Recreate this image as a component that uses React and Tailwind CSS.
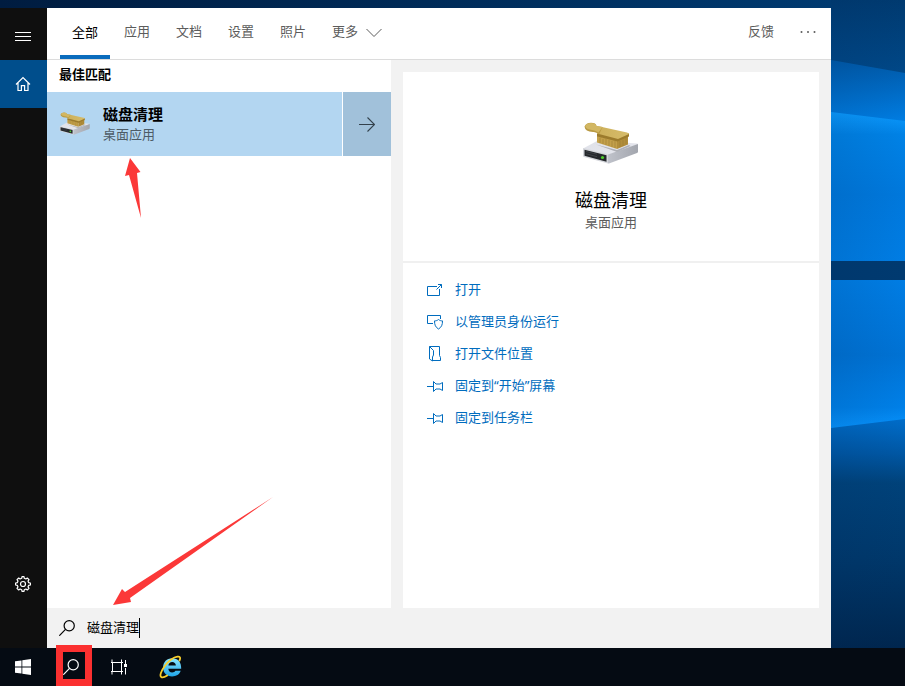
import React, { useId, useState } from 'react';

const TABS = ['全部', '应用', '文档', '设置', '照片'];

const HomeIcon = () => (
    <svg className="w-4 h-4" viewBox="0 0 16 16" fill="none" stroke="currentColor" strokeWidth="1.2">
        <path d="M1 8.5 8 1.5l7 7M3 6.8v7.7h3.4V9.6h3.2v4.9H13V6.8" />
    </svg>
);

const MenuIcon = () => (
    <svg className="w-4 h-4" viewBox="0 0 16 16" stroke="currentColor" strokeWidth="1">
        <path d="M0 4.5h16M0 8.5h16M0 12.5h16" />
    </svg>
);

const GearIcon = () => (
    <svg className="w-4 h-4" viewBox="0 0 16 16" fill="none" stroke="currentColor" strokeWidth="1.2" strokeLinejoin="round">
        <path d="M6.7 2.3 7 .6h2l.3 1.7 1.6.7 1.4-1L14 3.7l-1 1.4.7 1.6 1.7.3v2l-1.7.3-.7 1.6 1 1.4-1.7 1.7-1.4-1-1.6.7L9 15.4H7l-.3-1.7-1.6-.7-1.4 1L2 12.300l1-1.4-.7-1.600L.6 9V7l1.700-.3L3 5.100l-1-1.400L3.700 2l1.400 1z" />
        <circle cx="8" cy="8" r="2.500" />
    </svg>
);

const SearchIcon = () => (
    <svg className="w-4 h-4" viewBox="0 0 16 16" fill="none" stroke="currentColor" strokeWidth="1.2">
        <circle cx="10.2" cy="5.800" r="5.100" />
        <path d="M6.500 9.400.3 15.700" />
    </svg>
);

const ChevronIcon = () => (
    <svg className="w-4 h-4" viewBox="0 0 16 16" fill="none" stroke="currentColor" strokeWidth="1">
        <path d="M.5 5 8 12.500 15.500 5" />
    </svg>
);

const ArrowIcon = () => (
    <svg className="w-4 h-4" viewBox="0 0 16 16" fill="none" stroke="currentColor" strokeWidth="1.1">
        <path d="M0 8.500h15.500M8.500 1.500l7 7-7 7" />
    </svg>
);

const OpenIcon = () => (
    <svg className="w-4 h-4" viewBox="0 0 16 16" fill="none" stroke="currentColor" strokeWidth="1">
        <path d="M10 4.500H.5v9h12V7M9.500 7.500l5-5M11 2.500h3.500V6" />
    </svg>
);

const AdminIcon = () => (
    <svg className="w-4 h-4" viewBox="0 0 16 16" fill="none" stroke="currentColor" strokeWidth="1">
        <path d="M6 9.500H.5v-8h13V5" />
        <path d="M11.500 5.500c-1.200 1-2.500 1.400-4 1.400 0 4 1 6.300 4 8.100 3-1.800 4-4.100 4-8.100-1.500 0-2.800-.4-4-1.400z" />
    </svg>
);

const LocationIcon = () => (
    <svg className="w-4 h-4" viewBox="0 0 16 16" fill="none" stroke="currentColor" strokeWidth="1">
        <path d="M2.500.5h10v9l1 2v3H6M2.500.5v12.500l3 2v-4l1-2V4.500z" />
    </svg>
);

const PinIcon = () => (
    <svg className="w-4 h-4" viewBox="0 0 16 16" fill="none" stroke="currentColor" strokeWidth="1">
        <path d="M0 8.500h6.500M6.500 3.500v10L9 11h4l2.500 1.500v-8L13 6H9z" />
    </svg>
);

const ACTIONS = [
    { label: '打开', Icon: OpenIcon },
    { label: '以管理员身份运行', Icon: AdminIcon },
    { label: '打开文件位置', Icon: LocationIcon },
    { label: '固定到“开始”屏幕', Icon: PinIcon },
    { label: '固定到任务栏', Icon: PinIcon },
];

// Hard drive with a brush lying on it
const DiskCleanupIcon = ({ className }) => {
    const id = useId();
    return (
        <svg className={className} viewBox="0 0 56 44" aria-hidden="true">
            <defs>
                <linearGradient id={`${id}top`} x1="0" y1="0" x2="1" y2="1">
                    <stop offset="0" stopColor="#dfe1e8" />
                    <stop offset="1" stopColor="#e6e7ee" />
                </linearGradient>
                <linearGradient id={`${id}side`} x1="0" y1="0" x2="1" y2="0">
                    <stop offset="0" stopColor="#bfc2ca" />
                    <stop offset="1" stopColor="#a3a6ae" />
                </linearGradient>
                <linearGradient id={`${id}wood`} x1="0" y1="0" x2="1" y2="0">
                    <stop offset="0" stopColor="#cdb05a" />
                    <stop offset="1" stopColor="#d6bc6a" />
                </linearGradient>
            </defs>
            <path d="M0 26.500 15 18.500 54 21.500q1 0 1 1L25 33z" fill={`url(#${id}top)`} />
            <path d="M25 32.500 55 22v7.500q0 1-1 1.500L26 41.500h-1z" fill={`url(#${id}side)`} />
            <path d="M0 26 24 32q1 .3 1 1v8.500L1 35q-1-.3-1-1z" fill="#d5d7dc" />
            <path d="M1.500 27.800 23.500 33.200v6.600L1.500 33.800z" fill="#25282c" />
            <path d="M3 29.500 14 32.200M3 31.800 14 34.700" stroke="#45494e" strokeWidth=".8" />
            <circle cx="19.500" cy="35.500" r="1.600" fill="#4fd02c" />
            <path d="M13 22.500 34 28 46 23l1.500 1L34 30z" fill="#aeb0b6" />
            <path d="M14 14 34 18.500V27L14 20.500z" fill="#c3a04a" />
            <path d="M34 18.500 45 14v8.500L34 27z" fill="#b18d3a" />
            <path d="M17 16v5M20 17v5M23 17v6M26 18v6M29 19v6M32 19v7M37 19v6M40 18v6M43 16v6" stroke="#9c7c32" strokeWidth=".6" />
            <path d="M14 11.500h32v3L34.500 19.500 14 14.500z" fill="#9c7b2c" />
            <path d="M14 11.500 19 5l25 5.500q2 .5 2 1.500L35 17z" fill={`url(#${id}wood)`} />
            <path d="M1.500 4.500Q3 1 8 .8q5 0 5.500 3.200l6 1L16 12.500q-3-3-6-2.500-8-.5-8.500-5.500z" fill="#b99a43" />
            <path d="M2 3.800Q4 1 8 1q5 0 5.500 3l6 1-4 5.500Q12 8 9 8 3 7.500 2 3.800z" fill="#d2b763" />
        </svg>
    );
};

const WindowsIcon = () => (
    <svg className="w-4 h-4" viewBox="0 0 16 16" fill="currentColor">
        <path d="M0 2.300 6.500 1.400v6.200H0zM7.300 1.300 16 0v7.600H7.300zM0 8.400h6.500v6.200L0 13.700zM7.300 8.400H16V16l-8.700-1.300z" />
    </svg>
);

const TaskViewIcon = () => (
    <svg className="w-4 h-4" viewBox="0 0 16 16" fill="none" stroke="currentColor" strokeWidth="1">
        <path d="M0 3.500h12M0 12.500h12M1 .5v3M10.500.5v3M1 12.500v3M10.500 12.500v3M1.500 3.500v9M10.500 3.500v9M14.500 1v4M14.500 9v6.500" />
        <path d="M13 5h3v3h-3z" fill="currentColor" stroke="none" />
    </svg>
);

const ExplorerIcon = () => (
    <svg className="w-6 h-6" viewBox="0 0 24 24" fill="none">
        <defs>
            <linearGradient id="ie" x1="0" y1="0" x2="0" y2="1">
                <stop offset="0" stopColor="#8ae6ff" />
                <stop offset="1" stopColor="#1fa5e8" />
            </linearGradient>
        </defs>
        <path
            d="M22.200 13.800H9.300c.2 2.300 1.700 3.700 3.800 3.700 1.600 0 2.700-.6 3.300-1.700h5.300c-1.200 3.600-4.400 5.700-8.600 5.700-5.400 0-9-3.600-9-9s3.700-9.200 9.100-9.200c5.700 0 9.200 4 9 10.500zM9.400 10.400h7.500c-.2-2-1.600-3.300-3.700-3.300-2.100 0-3.500 1.300-3.800 3.300z"
            fill="url(#ie)"
        />
        <path
            d="M20.500 5.500c1.300-2.800.5-4.300-2-3.900-3.600.5-9 4.500-12.700 9.400C2 16 .4 20.800 2.200 22c1.300.9 3.600.1 6-1.500"
            stroke="#f8cf2c"
            strokeWidth="1.800"
            strokeLinecap="round"
        />
    </svg>
);

// Light beams of the desktop, visible beside the panel
const Wallpaper = () => (
    <svg className="w-[74px] shrink-0 self-stretch" viewBox="0 0 74 648" preserveAspectRatio="none" aria-hidden="true">
        <defs>
            <linearGradient id="sky" x1="0" y1="0" x2="0" y2="1">
                <stop offset="0" stopColor="#003a70" />
                <stop offset="1" stopColor="#00498a" />
            </linearGradient>
            <linearGradient id="haze" x1="0" y1="0" x2="0" y2="1">
                <stop offset="0" stopColor="#0059a8" />
                <stop offset="1" stopColor="#007fe6" />
            </linearGradient>
            <linearGradient id="upper" x1="0" y1="0" x2="0" y2="1">
                <stop offset="0" stopColor="#0c9bff" />
                <stop offset=".15" stopColor="#0082e6" />
                <stop offset=".55" stopColor="#0078dc" />
                <stop offset="1" stopColor="#007de4" />
            </linearGradient>
            <linearGradient id="lower" x1="0" y1="0" x2="0" y2="1">
                <stop offset="0" stopColor="#007de4" />
                <stop offset=".5" stopColor="#0072d4" />
                <stop offset=".85" stopColor="#0080e8" />
                <stop offset="1" stopColor="#0895ff" />
            </linearGradient>
            <linearGradient id="ground" x1="0" y1="0" x2="0" y2="1">
                <stop offset="0" stopColor="#006dca" />
                <stop offset=".15" stopColor="#0057a4" />
                <stop offset=".28" stopColor="#00427a" />
                <stop offset=".6" stopColor="#00386b" />
                <stop offset="1" stopColor="#00264e" />
            </linearGradient>
            <linearGradient id="shade" x1="0" y1="0" x2="1" y2="0">
                <stop offset="0" stopColor="#002a5c" stopOpacity=".12" />
                <stop offset="1" stopColor="#002a5c" stopOpacity="0" />
            </linearGradient>
        </defs>
        <path d="M0 0h74v80H0z" fill="url(#sky)" />
        <path d="M0 60 74 73v52H0z" fill="url(#haze)" />
        <path d="M0 112 74 121v141H0z" fill="url(#upper)" />
        <path d="M0 261h74v19H0z" fill="#003a70" />
        <path d="M0 280h74v150H0z" fill="url(#lower)" />
        <path d="M0 428 74 419v229H0z" fill="url(#ground)" />
        <path d="M0 0h74v648H0z" fill="url(#shade)" />
    </svg>
);

const Sidebar = () => (
    <nav className="flex w-[47px] shrink-0 flex-col bg-[#0f0f0f] pt-1 pb-10 text-white">
        <button type="button" aria-label="菜单" className="flex h-12 items-center pl-[15px]">
            <MenuIcon />
        </button>
        <button type="button" aria-label="主页" className="flex h-12 items-center bg-[#004e8c] pl-[15px]">
            <HomeIcon />
        </button>
        <button type="button" aria-label="设置" className="mt-auto flex h-12 items-center pl-[15px]">
            <GearIcon />
        </button>
    </nav>
);

const Header = ({ tab, onTab }) => (
    <header className="flex h-[52px] items-stretch border-b border-[#dcdcdc] pr-[13px] pl-[13px] text-[#5c5c5c]">
        <div className="flex gap-0.5">
            {TABS.map((name) => (
                <button
                    key={name}
                    type="button"
                    onClick={() => onTab(name)}
                    className={`border-b-4 px-3 ${tab === name ? 'border-[#0a6cbd] pt-0.5 text-black' : 'border-transparent'}`}
                >
                    {name}
                </button>
            ))}
            <button type="button" className="flex items-center gap-2 px-3 pb-1">
                更多
                <ChevronIcon />
            </button>
        </div>
        <button type="button" className="ml-auto px-3 pb-1">反馈</button>
        <button type="button" aria-label="更多选项" className="ml-3 flex w-5 items-center justify-center pb-1">
            <svg className="w-4 h-4" viewBox="0 0 16 16" fill="currentColor">
                <circle cx="1.500" cy="8" r="1" />
                <circle cx="8" cy="8" r="1" />
                <circle cx="14.500" cy="8" r="1" />
            </svg>
        </button>
    </header>
);

const Results = () => (
    <section className="relative w-[344px] shrink-0 bg-white">
        <h2 className="flex h-8 items-center px-3 pb-0.5 font-bold text-black">最佳匹配</h2>
        <div className="relative flex h-16 gap-px">
            <button type="button" className="flex flex-1 items-center gap-3 bg-[#b3d6f1] px-3 text-left">
                <DiskCleanupIcon className="w-8 h-6" />
                <span className="flex flex-col">
                    <span className="text-[15px] leading-5 font-bold text-black">磁盘清理</span>
                    <span className="leading-5 text-[#4d5b66]">桌面应用</span>
                </span>
            </button>
            <button type="button" aria-label="展开" className="flex w-12 items-center justify-center bg-[#a1c1da] text-[#33414c]">
                <ArrowIcon />
            </button>
            <svg className="absolute top-full left-[78px] mt-0.5 h-[60px] w-4" viewBox="0 0 16 60" fill="#fb3838" aria-hidden="true">
                <path d="M5 0 0 18l4-1 12 43-4-45 3.500-1z" />
            </svg>
        </div>
        <svg className="absolute bottom-[3px] left-[66px] h-[108px] w-[160px]" viewBox="0 0 160 108" fill="#fb3838" aria-hidden="true">
            <path d="M0 108 9 92l3 3L160 0 17 101l1 4z" />
        </svg>
    </section>
);

const Details = () => (
    <section className="flex flex-1 bg-[#f2f2f2] px-3 pt-3">
        <div className="flex-1 bg-white">
            <div className="flex h-[191px] flex-col items-center border-b-2 border-[#f0f0f0] pt-[50px]">
                <DiskCleanupIcon className="w-14 h-11" />
                <h1 className="mt-[22px] text-[18px] leading-6 text-black">磁盘清理</h1>
                <p className="leading-5 text-[#5c5c5c]">桌面应用</p>
            </div>
            <ul className="px-6 pt-[11px]">
                {ACTIONS.map(({ label, Icon }) => (
                    <li key={label}>
                        <button type="button" className="flex h-8 items-center gap-3 text-[#006cbe]">
                            <Icon />
                            {label}
                        </button>
                    </li>
                ))}
            </ul>
        </div>
    </section>
);

const Taskbar = () => (
    <footer className="flex h-[38px] bg-[#050b13] text-white">
        <button type="button" aria-label="开始" className="flex w-[47px] items-center pl-[15px]">
            <WindowsIcon />
        </button>
        <button type="button" aria-label="搜索" className="relative flex w-12 items-center justify-center">
            <SearchIcon />
            <span className="absolute -top-[3px] right-[3px] bottom-0 left-[9px] border-[7px] border-[#fb3030]" />
        </button>
        <button type="button" aria-label="任务视图" className="flex w-12 items-center justify-center">
            <TaskViewIcon />
        </button>
        <button type="button" aria-label="Internet Explorer" className="flex w-14 items-center justify-center">
            <ExplorerIcon />
        </button>
    </footer>
);

export default function App() {
    const [tab, setTab] = useState('全部');
    const [query, setQuery] = useState('磁盘清理');

    return (
        <div className="flex min-h-screen flex-col font-['Noto_Sans','Noto_Sans_CJK_SC',sans-serif] text-[13px]">
            <div className="flex flex-1">
                <div className="flex flex-1 bg-linear-to-r from-[#001c40] to-[#003a70] pt-2">
                    <Sidebar />
                    <main className="flex flex-1 flex-col bg-white">
                        <Header tab={tab} onTab={setTab} />
                        <div className="flex flex-1">
                            <Results />
                            <Details />
                        </div>
                        <label className="flex h-10 items-center bg-[#f2f2f2] px-3 text-black">
                            <SearchIcon />
                            <input
                                type="text"
                                aria-label="搜索"
                                value={query}
                                onChange={(e) => setQuery(e.target.value)}
                                className="field-sizing-content ml-3 caret-transparent outline-none"
                            />
                            <span className="h-5 w-px bg-black" />
                        </label>
                    </main>
                </div>
                <Wallpaper />
            </div>
            <Taskbar />
        </div>
    );
}
